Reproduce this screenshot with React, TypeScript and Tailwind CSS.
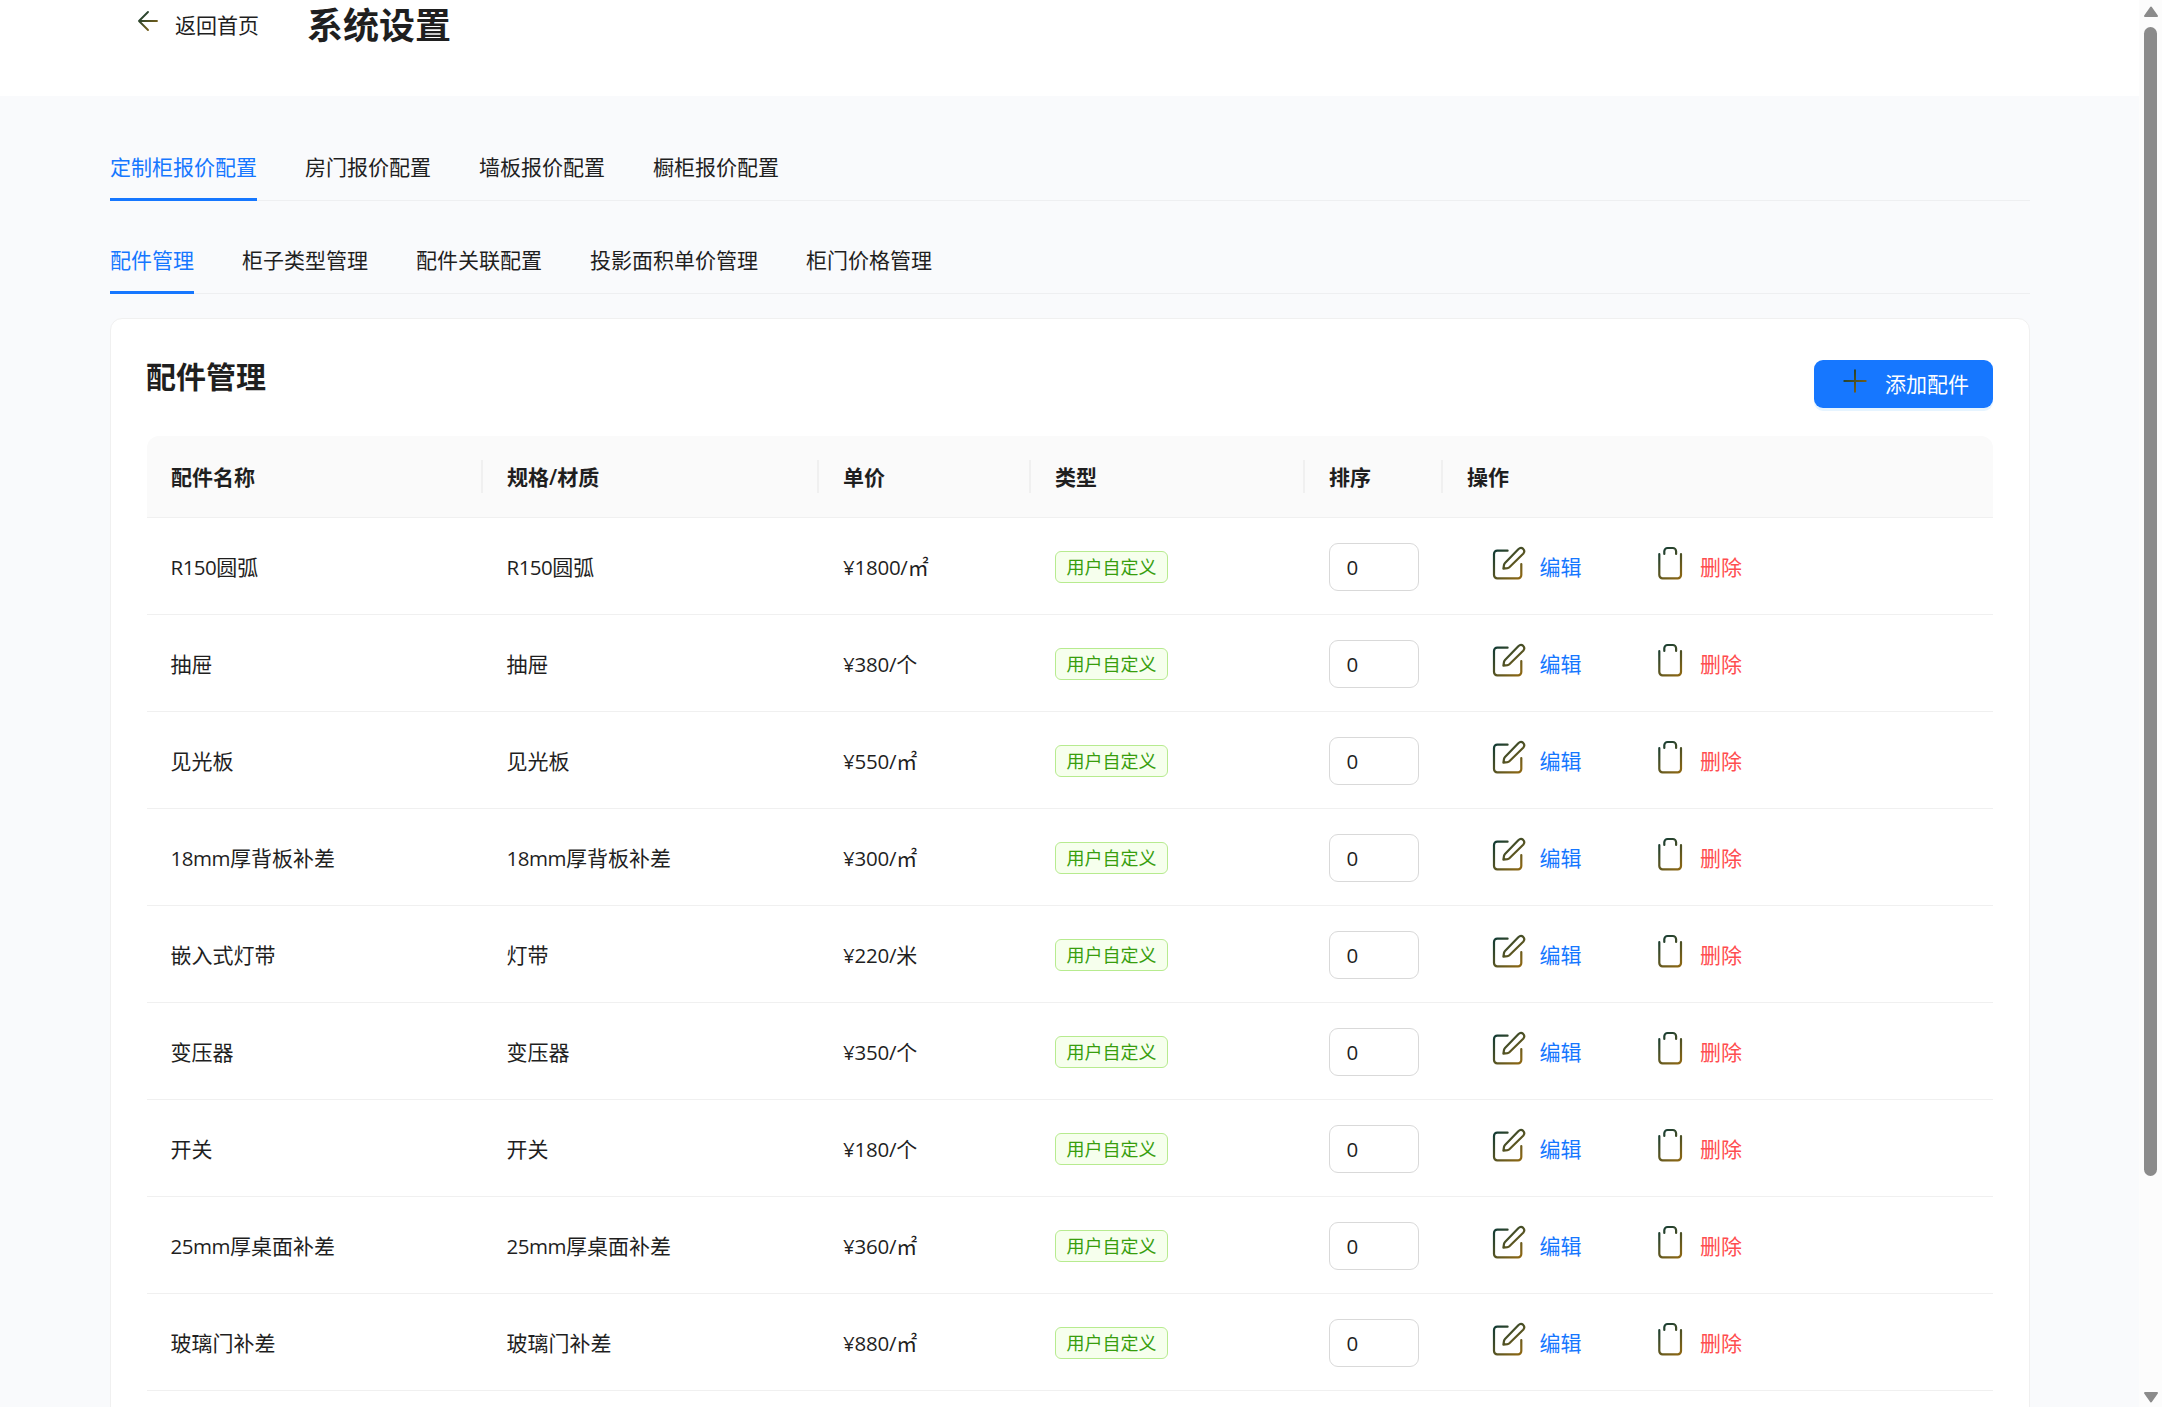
import React from "react";

type Row = { name: string; spec: string; price: string };

const rows: Row[] = [
  { name: "R150圆弧", spec: "R150圆弧", price: "¥1800/㎡" },
  { name: "抽屉", spec: "抽屉", price: "¥380/个" },
  { name: "见光板", spec: "见光板", price: "¥550/㎡" },
  { name: "18mm厚背板补差", spec: "18mm厚背板补差", price: "¥300/㎡" },
  { name: "嵌入式灯带", spec: "灯带", price: "¥220/米" },
  { name: "变压器", spec: "变压器", price: "¥350/个" },
  { name: "开关", spec: "开关", price: "¥180/个" },
  { name: "25mm厚桌面补差", spec: "25mm厚桌面补差", price: "¥360/㎡" },
  { name: "玻璃门补差", spec: "玻璃门补差", price: "¥880/㎡" },
];

const headers = ["配件名称", "规格/材质", "单价", "类型", "排序", "操作"];
const gridCols = "grid grid-cols-[336px_336px_212px_274px_138px_1fr]";

/** Latin runs are set slightly tighter than the Chinese text around them. */
function Mixed({ text, tracking = "tracking-[-0.5px]" }: { text: string; tracking?: string }) {
  return (
    <span className="whitespace-nowrap">
      {text.split(/([\x20-\xff]+)/).map((part, i) =>
        i % 2 ? (
          <span key={i} className={`text-[20.5px] ${tracking}`}>
            {part}
          </span>
        ) : (
          part
        ),
      )}
    </span>
  );
}

function Gradient({ id, x2, y2 }: { id: string; x2: number; y2: number }) {
  return (
    <defs>
      <linearGradient id={id} gradientUnits="userSpaceOnUse" x1="3" y1="3" x2={x2} y2={y2}>
        <stop offset="0" stopColor="#0b3936" />
        <stop offset="1" stopColor="#916913" />
      </linearGradient>
    </defs>
  );
}

function EditIcon({ id }: { id: string }) {
  return (
    <svg className="h-9 w-9 shrink-0" viewBox="0 0 36 36" fill="none" stroke={`url(#${id})`} strokeWidth="2.2" strokeLinecap="round" strokeLinejoin="round">
      <Gradient id={id} x2={30} y2={34} />
      <path d="M16.6 5.7H6.2a3.2 3.2 0 0 0-3.2 3.2v21.2a3.2 3.2 0 0 0 3.2 3.2h20.9a3.2 3.2 0 0 0 3.2-3.2V19" />
      <path d="M12.4 23.7l.6-3.7q.2-1.2 1-2L27.3 4.2q2.600-2.300 4.900-.3 2.200 2.300 0 4.900L18.400 22.200q-.8.8-2 1Z" />
    </svg>
  );
}

function DeleteIcon({ id }: { id: string }) {
  return (
    <svg className="h-9 w-[30px] shrink-0" viewBox="0 0 30 36" fill="none" stroke={`url(#${id})`} strokeWidth="2.2" strokeLinecap="round" strokeLinejoin="round">
      <Gradient id={id} x2={26} y2={34} />
      <path d="M4.300 9.200v20.900a3.200 3.200 0 0 0 3.200 3.200h15.300a3.200 3.200 0 0 0 3.200-3.200V9.200" />
      <path d="M9.300 8.900V6.300a3.300 3.300 0 0 1 3.300-3.300h5.200a3.300 3.300 0 0 1 3.300 3.300v2.600" />
    </svg>
  );
}

function Tabs({ items, className }: { items: string[]; className: string }) {
  return (
    <div className={`flex gap-12 border-b border-[#eeeff1] ${className}`}>
      {items.map((t, i) => (
        <div
          key={t}
          className={
            i === 0
              ? "-mb-[2px] h-[69px] border-b-[3px] border-[#1677ff] pt-[19px] leading-[33px] text-[#1677ff]"
              : "-mb-[2px] h-[69px] pt-[19px] leading-[33px]"
          }
        >
          {t}
        </div>
      ))}
    </div>
  );
}

function TableRow({ row, index }: { row: Row; index: number }) {
  return (
    <div className={`${gridCols} h-[97px] items-center border-b border-[#f0f0f0] pt-[2px] leading-[33px]`}>
      <div className="pl-[23.500px]"><Mixed text={row.name} /></div>
      <div className="pl-[23.500px]"><Mixed text={row.spec} /></div>
      <div className="pl-6"><Mixed text={row.price} tracking="tracking-[-0.25px]" /></div>
      <div className="pl-6">
        <div className="flex h-8 w-[113px] items-center justify-center rounded-md border border-[#b7eb8f] bg-[#f6ffed] text-lg leading-none text-[#389e0d]">
          用户自定义
        </div>
      </div>
      <div className="pl-6">
        <div className="flex h-12 w-[90px] items-center rounded-[9px] border border-[#d9d9d9] pl-[16.500px]">
          <Mixed text="0" />
        </div>
      </div>
      <div className="flex items-center pl-12">
        <div className="flex items-center gap-[12.500px] text-[#1677ff]">
          <span className="-mt-[9px]"><EditIcon id={`edit-${index}`} /></span>
          编辑
        </div>
        <div className="ml-[73.500px] flex items-center gap-[15px] text-[#ff4d4f]">
          <span className="-mt-[9px]"><DeleteIcon id={`delete-${index}`} /></span>
          删除
        </div>
      </div>
    </div>
  );
}

export default function App() {
  return (
    <div className="flex h-[1407px] w-[2162px] overflow-hidden bg-[#f9fafc] font-['Open_Sans','Noto_Sans_CJK_SC',sans-serif] text-[21px] text-[#1f1f1f]">
      <div className="min-w-0 flex-1">
        <header className="flex h-24 items-start bg-white pl-[136px]">
          <svg className="mt-[9px] h-6 w-6" viewBox="0 0 24 24" fill="none" stroke="url(#back)" strokeWidth="1.9" strokeLinecap="round" strokeLinejoin="round">
            <Gradient id="back" x2={20} y2={22} />
            <path d="M12 3L3 12l9 9M3 12h18" />
          </svg>
          <span className="ml-[15px] pt-[9px] leading-[33px]">返回首页</span>
          <h1 className="ml-12 pt-[2px] text-[36px] font-bold leading-[48px]">系统设置</h1>
        </header>

        <main className="ml-[110px] w-[1920px]">
          <Tabs className="mt-9 h-[69px]" items={["定制柜报价配置", "房门报价配置", "墙板报价配置", "橱柜报价配置"]} />
          <Tabs className="mt-6 h-[69px]" items={["配件管理", "柜子类型管理", "配件关联配置", "投影面积单价管理", "柜门价格管理"]} />

          <section className="mt-6 h-[1300px] rounded-xl border border-[#f0f0f0] bg-white px-9 pt-[41px]">
            <div className="flex h-[76px] items-start justify-between">
              <h2 className="-ml-px -mt-[4px] text-[30px] font-semibold leading-[42px]">配件管理</h2>
              <button className="flex h-12 w-[179px] items-center rounded-[9px] bg-[#1677ff] pl-7 text-white shadow-[0_3px_0_rgba(5,145,255,0.1)]">
                <svg className="-mt-[7px] h-[26px] w-[26px]" viewBox="0 0 26 26" fill="none" stroke="url(#plus)" strokeWidth="2" strokeLinecap="round">
                  <Gradient id="plus" x2={24} y2={24} />
                  <path d="M13 2.300v21.400M2.300 13h21.400" />
                </svg>
                <span className="ml-[17px] mt-[2px]">添加配件</span>
              </button>
            </div>

            <div className={`${gridCols} h-[82px] items-center rounded-t-xl border-b border-[#f0f0f0] bg-[#fafafa] font-semibold leading-[33px]`}>
              {headers.map((h, i) => (
                <div key={h} className={i < 5 ? "h-[33px] border-r-2 border-[#f0f0f0] pl-6 pt-px" : "h-[33px] pl-6 pt-px"}>
                  {h}
                </div>
              ))}
            </div>
            {rows.map((r, i) => (
              <TableRow key={r.name} row={r} index={i} />
            ))}
          </section>
        </main>
      </div>

      <div className="flex w-[23px] flex-col items-center bg-[#fcfcfc]">
        <svg className="mt-[6px] h-3 w-4" viewBox="0 0 16 12" fill="#8b8b8b" stroke="#8b8b8b" strokeWidth="2" strokeLinejoin="round">
          <path d="M8 1.500L14 10H2Z" />
        </svg>
        <div className="mt-[9px] h-[1149px] w-[13px] rounded-full bg-[#8b8b8b]" />
        <svg className="mb-[4px] mt-auto h-3 w-4" viewBox="0 0 16 12" fill="#8b8b8b" stroke="#8b8b8b" strokeWidth="2" strokeLinejoin="round">
          <path d="M2 2h12L8 10.500Z" />
        </svg>
      </div>
    </div>
  );
}
